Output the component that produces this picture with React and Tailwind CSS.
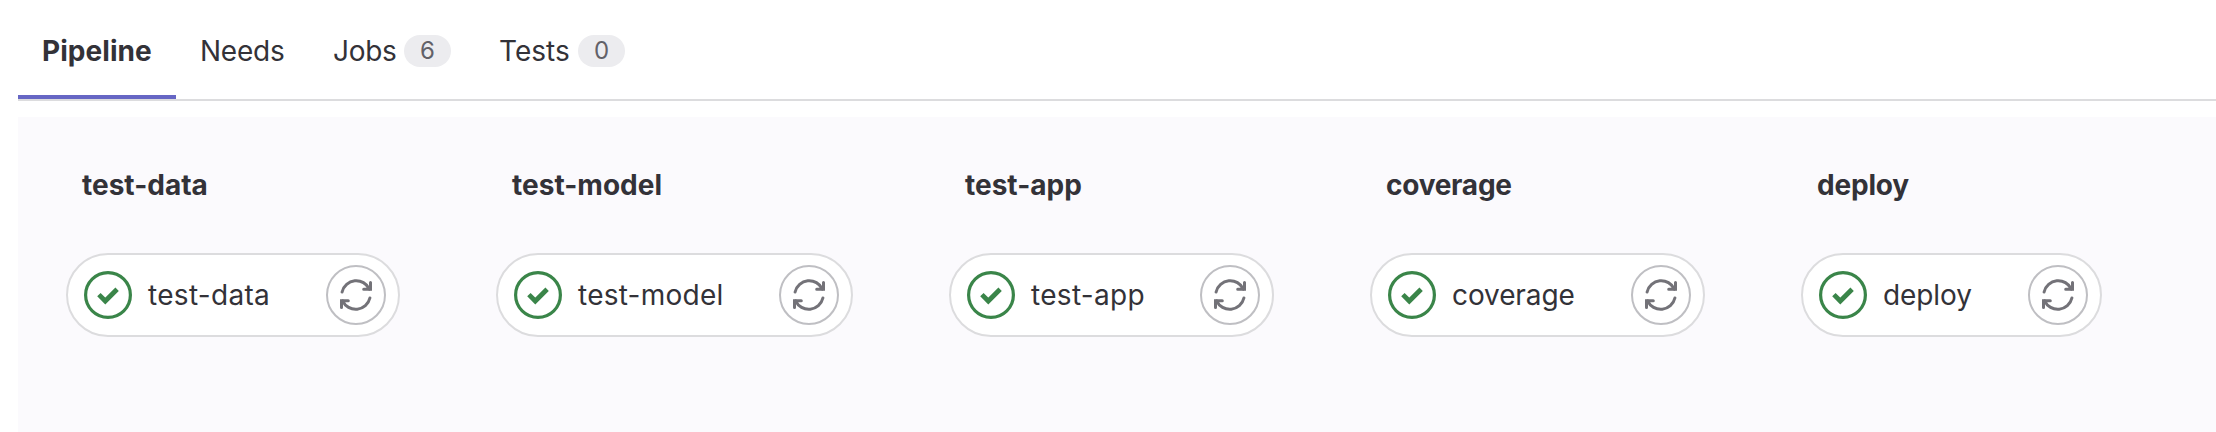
const tabs = [
  { label: 'Pipeline', active: true, width: 'w-[158px]', tracking: 'tracking-[0.05px]' },
  { label: 'Needs', width: 'w-[133px]', tracking: 'tracking-[-0.25px]' },
  { label: 'Jobs', count: 6, width: 'w-[166px]', tracking: 'tracking-[-0.3px]' },
  { label: 'Tests', count: 0, width: 'w-[174px]', tracking: 'tracking-[0px]' },
];

const stages = [
  { name: 'test-data', width: 'w-[334px]', heading: 'tracking-[0px]', tracking: 'tracking-[0.3px]' },
  { name: 'test-model', width: 'w-[357px]', heading: 'tracking-[0.02px]', tracking: 'tracking-[0.25px]' },
  { name: 'test-app', width: 'w-[325px]', heading: 'tracking-[0px]', tracking: 'tracking-[0.3px]' },
  { name: 'coverage', width: 'w-[335px]', heading: 'tracking-[-0.25px]', tracking: 'tracking-[-0.1px]' },
  { name: 'deploy', width: 'w-[301px]', heading: 'tracking-[-0.2px]', tracking: 'tracking-[-0.1px]' },
];

function StatusIcon() {
  return (
    <svg className="size-12 shrink-0 text-[#3a8549]" viewBox="0 0 48 48" fill="none" stroke="currentColor">
      <circle cx="24" cy="24" r="22.4" strokeWidth="3.2" />
      <path d="M14.9 23.6 21.3 30 33.1 18.3" strokeWidth="4.8" strokeLinejoin="miter" />
    </svg>
  );
}

function RetryIcon() {
  return (
    <svg className="size-8 shrink-0 text-[#737278]" viewBox="0 0 32 32" fill="none" stroke="currentColor" strokeWidth="3" strokeLinecap="round" strokeLinejoin="miter">
      <path d="M2.1 13A14.5 14.5 0 0 1 29.4 10.2" />
      <path d="M30.5 3.6V10.2H23.7" />
      <path d="M29.9 19A14.5 14.5 0 0 1 2.6 21.8" />
      <path d="M1.5 28.4V21.8H8.3" />
    </svg>
  );
}

function Tab({ tab }) {
  return (
    <div className={`flex h-[99px] shrink-0 flex-col justify-between ${tab.width}`}>
      <div className="mt-[35px] flex h-8 items-center justify-between px-6">
        <span className={`text-[28px] leading-8 whitespace-nowrap ${tab.tracking} ${tab.active ? 'font-bold' : ''}`}>{tab.label}</span>
        {tab.count !== undefined && (
          <span className="flex h-8 w-[47px] items-center justify-center rounded-full bg-[#ececef] text-2xl leading-8 text-[#626168]">{tab.count}</span>
        )}
      </div>
      {tab.active && <div className="h-1 bg-[#6666c4]" />}
    </div>
  );
}

function Stage({ stage }) {
  return (
    <section className={`shrink-0 ${stage.width}`}>
      <h2 className={`pl-4 text-[28px] leading-10 font-bold whitespace-nowrap ${stage.heading}`}>{stage.name}</h2>
      <div className="mt-12 flex h-[84px] items-center rounded-full border-2 border-[#dcdcde] bg-white pr-3 pl-4">
        <StatusIcon />
        <span className={`ml-4 grow text-[28px] leading-10 whitespace-nowrap ${stage.tracking}`}>{stage.name}</span>
        <button className="flex size-[60px] shrink-0 items-center justify-center rounded-full border-2 border-[#bfbfc3]">
          <RetryIcon />
        </button>
      </div>
    </section>
  );
}

export default function App() {
  return (
    <div className="flex h-[432px] w-[2216px] flex-col overflow-hidden bg-white pl-[18px] font-['Inter',sans-serif] text-[#333238]">
      <nav className="flex h-[101px] shrink-0 border-b-2 border-[#dcdcde]">
        {tabs.map((tab) => <Tab key={tab.label} tab={tab} />)}
      </nav>
      <main className="mt-4 flex grow gap-24 bg-[#fbfafd] pt-12 pl-12">
        {stages.map((stage) => <Stage key={stage.name} stage={stage} />)}
      </main>
    </div>
  );
}
